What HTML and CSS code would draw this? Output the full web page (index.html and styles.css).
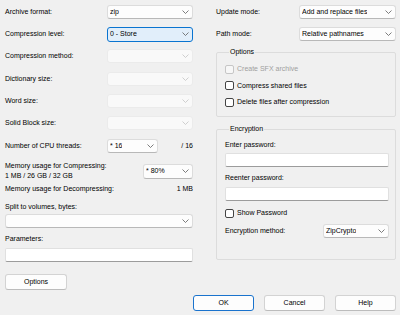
FILE: index.html
```html
<!DOCTYPE html>
<html lang="en">
  <head>
    <meta charset="UTF-8" />
    <title>Add to Archive</title>
    <link rel="stylesheet" href="styles.css">
  </head>
  <body>
    <div class="dialog">
      <div class="main">
        <div class="left">
          <div class="field">
            <label>Archive format:</label>
            <div class="combo"><span>zip</span><svg class="chev" width="7" height="4" viewBox="0 0 7 4"><path d="M0.5 0.5L3.5 3.5L6.5 0.5"/></svg></div>
          </div>
          <div class="field">
            <label>Compression level:</label>
            <div class="combo focus"><span>0 - Store</span><svg class="chev" width="7" height="4" viewBox="0 0 7 4"><path d="M0.5 0.5L3.5 3.5L6.5 0.5"/></svg></div>
          </div>
          <div class="field">
            <label>Compression method:</label>
            <div class="combo disabled"><span></span><svg class="chev" width="7" height="4" viewBox="0 0 7 4"><path d="M0.5 0.5L3.5 3.5L6.5 0.5"/></svg></div>
          </div>
          <div class="field">
            <label>Dictionary size:</label>
            <div class="combo disabled"><span></span><svg class="chev" width="7" height="4" viewBox="0 0 7 4"><path d="M0.5 0.5L3.5 3.5L6.5 0.5"/></svg></div>
          </div>
          <div class="field">
            <label>Word size:</label>
            <div class="combo disabled"><span></span><svg class="chev" width="7" height="4" viewBox="0 0 7 4"><path d="M0.5 0.5L3.5 3.5L6.5 0.5"/></svg></div>
          </div>
          <div class="field">
            <label>Solid Block size:</label>
            <div class="combo disabled"><span></span><svg class="chev" width="7" height="4" viewBox="0 0 7 4"><path d="M0.5 0.5L3.5 3.5L6.5 0.5"/></svg></div>
          </div>
          <div class="field cpu">
            <label>Number of CPU threads:</label>
            <div class="combo"><span>* 16</span><svg class="chev" width="7" height="4" viewBox="0 0 7 4"><path d="M0.5 0.5L3.5 3.5L6.5 0.5"/></svg></div>
            <span class="max">/ 16</span>
          </div>
          <div class="memory">
            <div class="mem-text">
              <div>Memory usage for Compressing:</div>
              <div>1 MB / 26 GB / 32 GB</div>
            </div>
            <div class="combo mem"><span>* 80%</span><svg class="chev" width="7" height="4" viewBox="0 0 7 4"><path d="M0.5 0.5L3.5 3.5L6.5 0.5"/></svg></div>
          </div>
          <div class="decomp">
            <span>Memory usage for Decompressing:</span>
            <span>1 MB</span>
          </div>
          <label class="caption split-cap">Split to volumes, bytes:</label>
          <div class="combo split"><span></span><svg class="chev" width="7" height="4" viewBox="0 0 7 4"><path d="M0.5 0.5L3.5 3.5L6.5 0.5"/></svg></div>
          <label class="caption params-cap">Parameters:</label>
          <div class="edit params"></div>
          <button class="btn options">Options</button>
        </div>

        <div class="right">
          <div class="field wide">
            <label>Update mode:</label>
            <div class="combo"><span>Add and replace files</span><svg class="chev" width="7" height="4" viewBox="0 0 7 4"><path d="M0.5 0.5L3.5 3.5L6.5 0.5"/></svg></div>
          </div>
          <div class="field wide">
            <label>Path mode:</label>
            <div class="combo"><span>Relative pathnames</span><svg class="chev" width="7" height="4" viewBox="0 0 7 4"><path d="M0.5 0.5L3.5 3.5L6.5 0.5"/></svg></div>
          </div>

          <fieldset class="group options-group">
            <legend>Options</legend>
            <div class="check disabled"><span class="box"></span>Create SFX archive</div>
            <div class="check"><span class="box"></span>Compress shared files</div>
            <div class="check"><span class="box"></span>Delete files after compression</div>
          </fieldset>

          <fieldset class="group enc-group">
            <legend>Encryption</legend>
            <label class="caption">Enter password:</label>
            <div class="edit pass"></div>
            <label class="caption reenter">Reenter password:</label>
            <div class="edit pass"></div>
            <div class="check show"><span class="box"></span>Show Password</div>
            <div class="enc-method">
              <label>Encryption method:</label>
              <div class="combo"><span>ZipCrypto</span><svg class="chev" width="7" height="4" viewBox="0 0 7 4"><path d="M0.5 0.5L3.5 3.5L6.5 0.5"/></svg></div>
            </div>
          </fieldset>
        </div>
      </div>

      <div class="buttons">
        <button class="btn default">OK</button>
        <button class="btn">Cancel</button>
        <button class="btn">Help</button>
      </div>
    </div>
  </body>
</html>
```

FILE: styles.css
```css
* {
  margin: 0;
  padding: 0;
  box-sizing: border-box;
}
body {
  background-color: #f0f0f0;
  font-family: "Liberation Sans", Arial, sans-serif;
  font-size: 7px;
  line-height: 10px;
  color: #000;
}
.dialog {
  width: 400px;
  height: 315px;
  padding: 4.5px 4px 0 5px;
}
.main {
  display: flex;
  gap: 23px;
}
.left {
  width: 188px;
  display: flex;
  flex-direction: column;
}
.right {
  width: 180px;
  display: flex;
  flex-direction: column;
}

/* label + combo rows */
.field {
  display: grid;
  grid-template-columns: 102px 86px;
  align-items: center;
  height: 14px;
  margin-bottom: 8.4px;
}
.field.cpu {
  grid-template-columns: 102px 51px 1fr;
}
.field.cpu .max {
  text-align: right;
}
.field.wide {
  grid-template-columns: 83px 97px;
  margin-bottom: 8.5px;
}

.combo {
  height: 14px;
  display: flex;
  align-items: center;
  justify-content: space-between;
  padding: 0 2px 0 2px;
  background-color: #fdfdfd;
  border: 1px solid #dcdcdc;
  border-bottom-color: #b8b8b8;
  border-radius: 3px;
  white-space: nowrap;
}
.combo span {
  overflow: hidden;
}
.chev {
  flex-shrink: 0;
  margin-right: 1px;
}
.chev path {
  fill: none;
  stroke: #5c5c5c;
  stroke-width: 0.8;
}
.combo.focus {
  height: 15px;
  background-color: #e1eefa;
  border-color: #0a74d0;
}
.combo.disabled {
  background-color: #f9f9f9;
  border-color: #ebebeb;
}
.combo.disabled .chev path {
  stroke: #c4c4c4;
}

.memory {
  display: flex;
  justify-content: space-between;
  align-items: center;
  height: 20px;
  margin-top: -0.4px;
}
.combo.mem {
  width: 50px;
  height: 15px;
  margin-top: 1px;
}
.decomp {
  display: flex;
  justify-content: space-between;
  margin-top: 3px;
}
.caption {
  display: block;
}
.split-cap {
  margin-top: 8.5px;
}
.combo.split {
  margin-top: 2px;
}
.params-cap {
  margin-top: 6px;
}
.edit {
  height: 14px;
  background-color: #fff;
  border: 1px solid #e0e0e0;
  border-bottom-color: #9c9c9c;
  border-radius: 2px;
}
.edit.params {
  margin-top: 4px;
}

.btn {
  font-family: inherit;
  font-size: 7px;
  line-height: 10px;
  color: #000;
  height: 16px;
  background-color: #fdfdfd;
  border: 1px solid #d3d3d3;
  border-bottom-color: #bcbcbc;
  border-radius: 3px;
}
.btn.options {
  width: 62px;
  margin-top: 12px;
}

/* group boxes */
.group {
  border: 1px solid #dcdcdc;
  border-radius: 2px;
  padding: 6px 6px 9px 8px;
}
.group legend {
  margin-left: 4px;
  padding: 0 1px;
  line-height: 10px;
}
.options-group {
  margin-top: -2.5px;
}
.check {
  display: flex;
  align-items: center;
  gap: 3px;
  height: 10px;
  margin-top: 6.7px;
}
.options-group .check:first-of-type {
  margin-top: 1px;
}
.check .box {
  width: 9px;
  height: 9px;
  background-color: #fff;
  border: 1px solid #444;
  border-radius: 2px;
}
.check.disabled {
  color: #9f9f9f;
}
.check.disabled .box {
  background-color: #f7f7f7;
  border-color: #c6c6c6;
}

.enc-group {
  margin-top: 7px;
  padding: 0 6px 21px 8px;
}
.enc-group .caption:first-of-type {
  margin-top: 6px;
}
.edit.pass {
  margin-top: 3px;
}
.enc-group .reenter {
  margin-top: 6px;
}
.enc-group .reenter + .edit.pass {
  margin-top: 4px;
}
.check.show {
  margin-top: 7px;
}
.enc-method {
  display: grid;
  grid-template-columns: 98px 66px;
  align-items: center;
  margin-top: 6px;
}

.buttons {
  display: flex;
  justify-content: flex-end;
  gap: 10px;
  margin-top: 5px;
}
.buttons .btn {
  width: 61px;
  height: 15.5px;
}
.btn.default {
  border-color: #1a73cd;
}
```
